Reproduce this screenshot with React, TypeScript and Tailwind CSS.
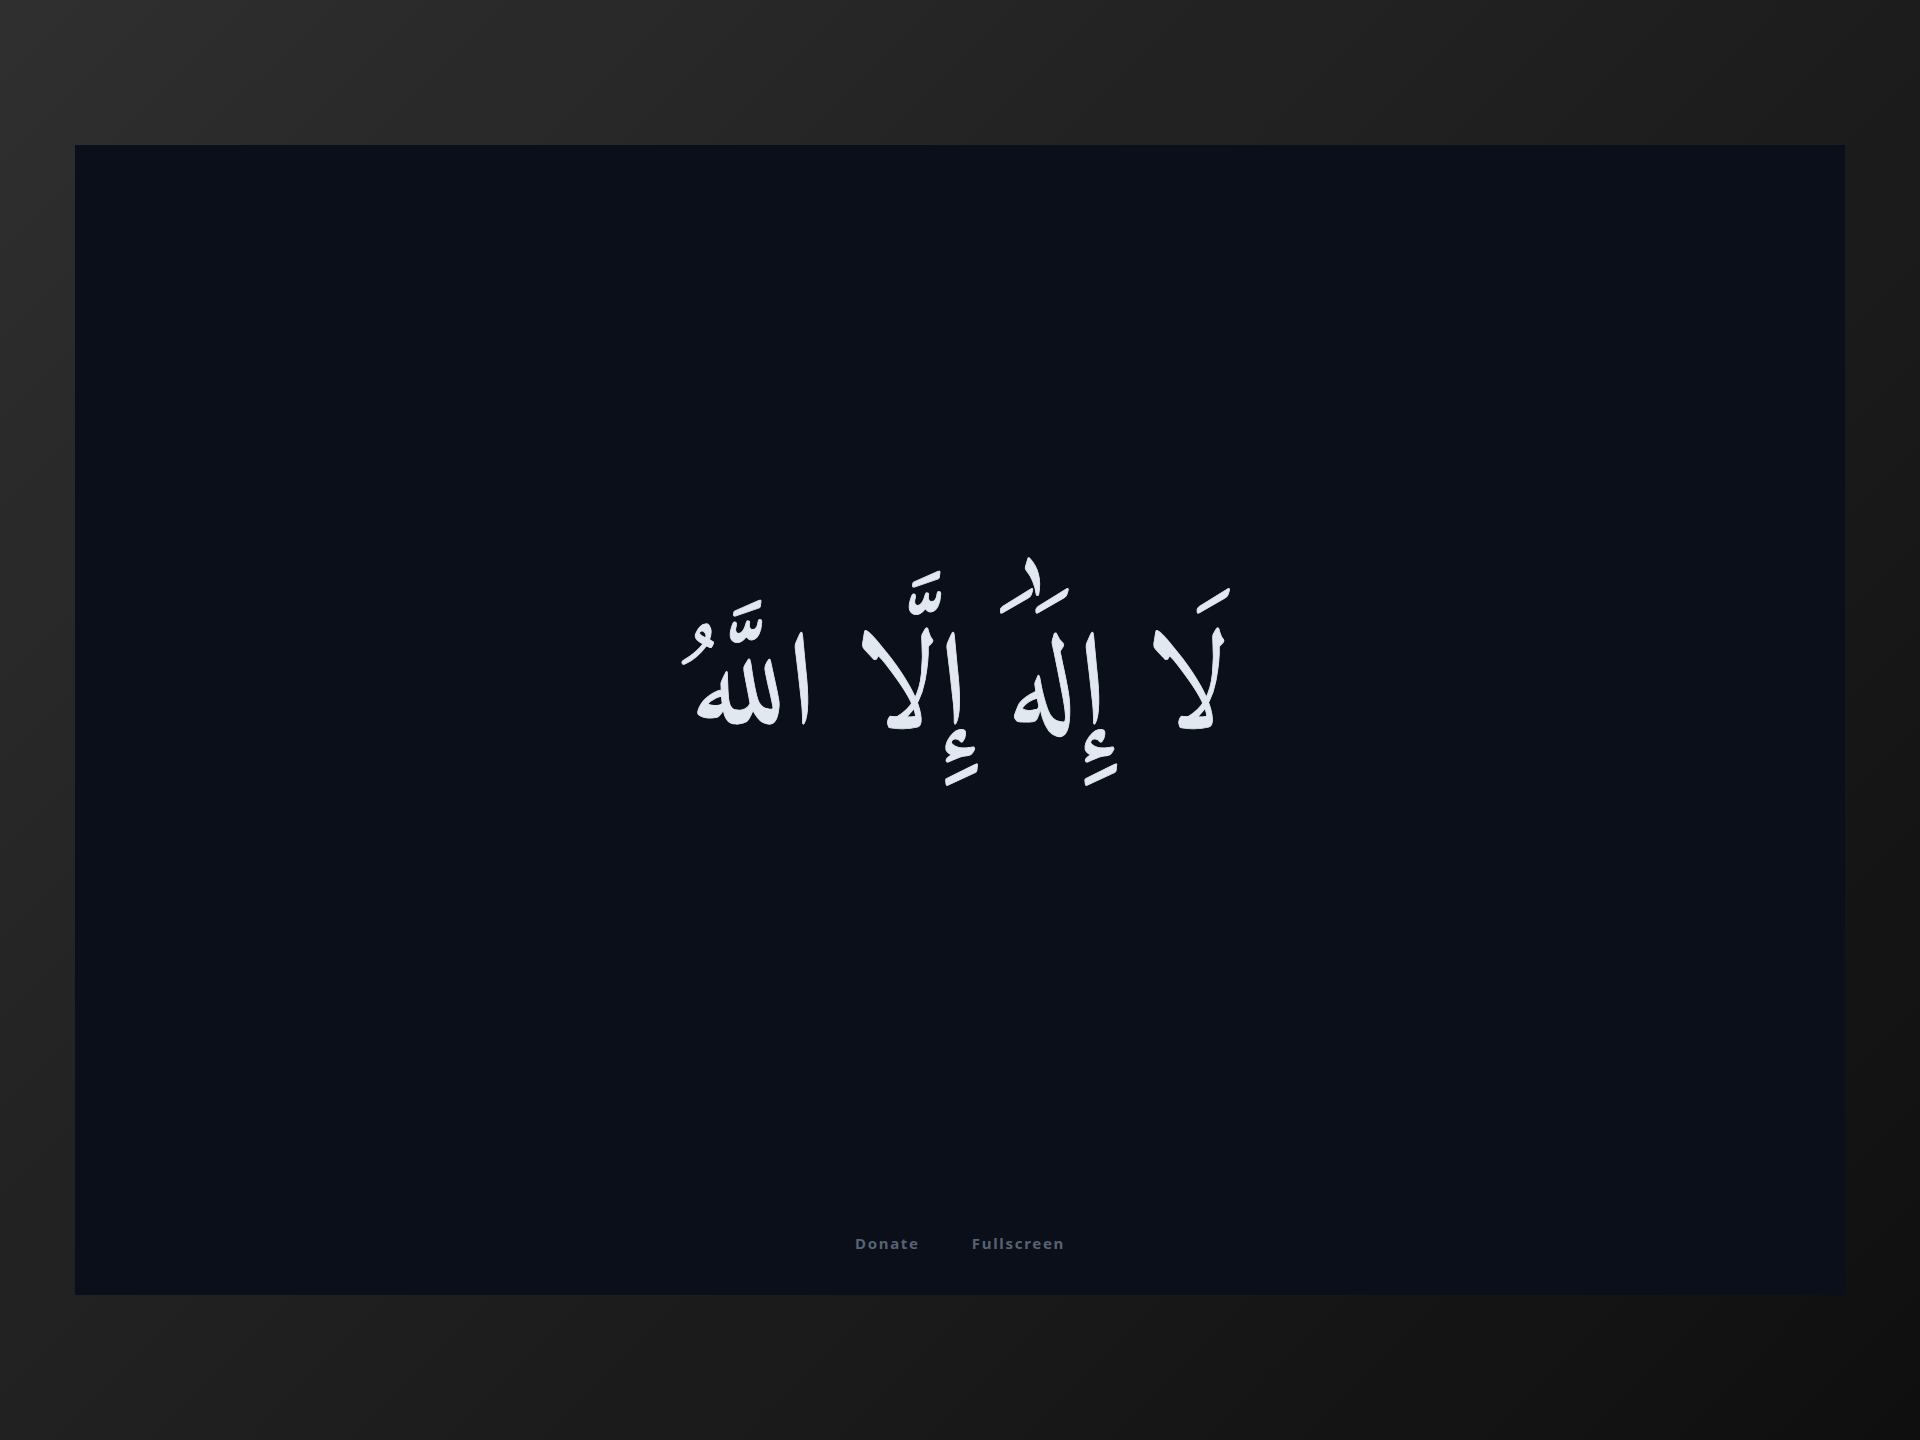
export default function App() {
  return (
    <div className="h-[1440px] w-full overflow-hidden bg-[linear-gradient(135deg,#2f2f2f_0%,#232323_35%,#1a1a1a_65%,#0f0f0f_100%)] px-[75px] pt-[145px] pb-[145px]">
      <div className="flex h-[1150px] flex-col bg-[#0b0f19]">
        <div className="flex flex-1 items-center justify-center pt-[7px]">
          <h1 dir="rtl" lang="ar" className="font-['Amiri',serif] text-[132px] font-normal leading-none text-[#e2e8f0] [-webkit-text-stroke:0.8px_#e2e8f0]">
            لَا إِلَٰهَ إِلَّا اللَّهُ
          </h1>
        </div>
        <div className="flex justify-center gap-[52px] pb-[41px] font-['Noto_Sans',sans-serif] text-[15px] font-bold tracking-[1.7px] text-[#566273]">
          <span>Donate</span>
          <span>Fullscreen</span>
        </div>
      </div>
    </div>
  );
}
